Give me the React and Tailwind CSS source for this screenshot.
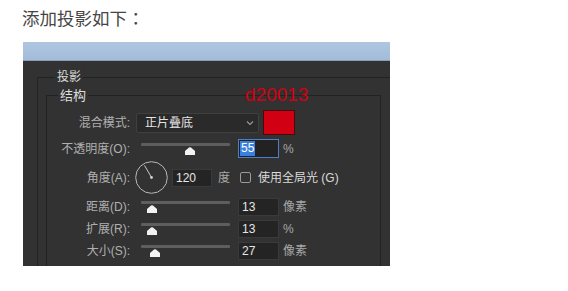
import React from "react";

const FONT = { fontFamily: '"Liberation Sans", "Noto Sans CJK SC", sans-serif' };

function Thumb({ left }) {
  return (
    <svg
      className="absolute top-[6px]"
      style={{ left: left - 5 }}
      width="10"
      height="8"
      viewBox="0 0 10 8"
    >
      <path d="M4 0.6 Q5 0 6 0.6 L10 4 L10 8 L0 8 L0 4 Z" fill="#f2f2f2" />
    </svg>
  );
}

function Slider({ pos }) {
  return (
    <div className="relative w-[89px] h-[16px] shrink-0">
      <div className="absolute left-0 right-0 top-[2px] h-[3px] bg-[#5e5e5e] rounded-[1px]" />
      <Thumb left={pos} />
    </div>
  );
}

function NumInput({ value, active }) {
  if (active) {
    return (
      <div className="w-[41px] h-[19px] shrink-0 border border-[#4a7fc9] bg-[#222222] flex items-center pl-[1px]">
        <span className="bg-[#3a80dc] text-white text-[12px] leading-[15px] px-[1px]">{value}</span>
      </div>
    );
  }
  return (
    <div className="w-[41px] h-[18px] shrink-0 border border-[#3a3a3a] bg-[#242424] flex items-center pl-[3px] text-[12px] text-[#e6e6e6]">
      {value}
    </div>
  );
}

function Label({ children }) {
  return (
    <div className="w-[83px] shrink-0 text-right text-[12px] text-[#b0b0b0] leading-[14px]">{children}</div>
  );
}

function SliderRow({ label, pos, value, unit, active, h = "h-[20px]", mt = "mt-[2px]" }) {
  return (
    <div className={`flex items-center ${h} ${mt}`}>
      <Label>{label}</Label>
      <div className="ml-[11px]">
        <Slider pos={pos} />
      </div>
      <div className="ml-[8px]">
        <NumInput value={value} active={active} />
      </div>
      <div className="ml-[4px] text-[12px] text-[#a8a8a8]">{unit}</div>
    </div>
  );
}

export default function App() {
  return (
    <div className="w-[568px] h-[291px] bg-white overflow-hidden" style={FONT}>
      <div className="pt-[6px] pl-[22px] text-[17.5px] leading-[24px] text-[#464646]">
        添加投影如下<span style={{ fontFamily: '"Noto Sans CJK JP", sans-serif' }}>：</span>
      </div>
      <div className="mt-[11px] ml-[23px] w-[367px] h-[224px] flex flex-col overflow-hidden">
        <div className="h-[19px] bg-gradient-to-b from-[#afc6e0] to-[#a3bcda] border-b border-[#8aa0b8]" />
        <div className="relative flex-1 bg-[#323232] overflow-hidden pt-[9px]">
          <fieldset className="ml-[14px] w-[360px] h-[220px] border border-[#222222] pl-[8px]">
            <legend className="ml-[9px] px-[2px] text-[12px] leading-[14px] text-[#d8d8d8]">投影</legend>
            <fieldset className="mt-[4px] w-[335px] h-[200px] border border-[#222222]">
              <legend className="ml-[11px] px-[2px] text-[13px] leading-[15px] text-[#dedede]">结构</legend>
              <div className="flex flex-col pt-[7px]">
                <div className="flex items-center h-[25px]">
                  <Label>混合模式:</Label>
                  <div className="ml-[6px] w-[123px] h-[20px] border border-[#404040] bg-[#2a2a2a] rounded-[2px] flex items-center justify-between pl-[8px] pr-[4px]">
                    <span className="text-[12px] text-[#e4e4e4]">正片叠底</span>
                    <svg width="8" height="6" viewBox="0 0 8 6">
                      <path d="M1 1.5 L4 4.5 L7 1.5" fill="none" stroke="#9a9a9a" strokeWidth="1.1" />
                    </svg>
                  </div>
                  <div className="ml-[4px] w-[32px] h-[25px] bg-[#d20013] border border-[#4a0a0a]" />
                </div>
                <SliderRow label="不透明度(O):" pos={49} value="55" unit="%" active h="h-[21px]" mt="mt-[3px]" />
                <div className="flex items-center h-[33px] mt-[2px]">
                  <Label>角度(A):</Label>
                  <svg className="ml-[5px] shrink-0" width="33" height="33" viewBox="0 0 33 33">
                    <circle cx="16.5" cy="16.5" r="15.8" fill="none" stroke="#b8b8b8" strokeWidth="1" />
                    <line x1="16.5" y1="16.5" x2="9.5" y2="4.4" stroke="#c8c8c8" strokeWidth="1" />
                    <circle cx="16.5" cy="16.5" r="1.4" fill="#d0d0d0" />
                  </svg>
                  <div className="ml-[4px] w-[40px] h-[18px] border border-[#3a3a3a] bg-[#242424] flex items-center pl-[3px] text-[12px] text-[#e6e6e6]">120</div>
                  <div className="ml-[6px] text-[12px] text-[#a8a8a8]">度</div>
                  <div className="ml-[10px] w-[11px] h-[11px] border border-[#9a9a9a] rounded-[2px]" />
                  <div className="ml-[7px] text-[12px] text-[#dadada]">使用全局光 (G)</div>
                </div>
                <SliderRow label="距离(D):" pos={11} value="13" unit="像素" mt="mt-[3px]" />
                <SliderRow label="扩展(R):" pos={11} value="13" unit="%" />
                <SliderRow label="大小(S):" pos={14} value="27" unit="像素" />
              </div>
            </fieldset>
          </fieldset>
          <div className="absolute left-[222px] top-[24px] text-[19px] leading-[19px] text-[#d20013]" style={{ fontFamily: '"Liberation Sans", sans-serif' }}>
            d20013
          </div>
        </div>
      </div>
    </div>
  );
}
